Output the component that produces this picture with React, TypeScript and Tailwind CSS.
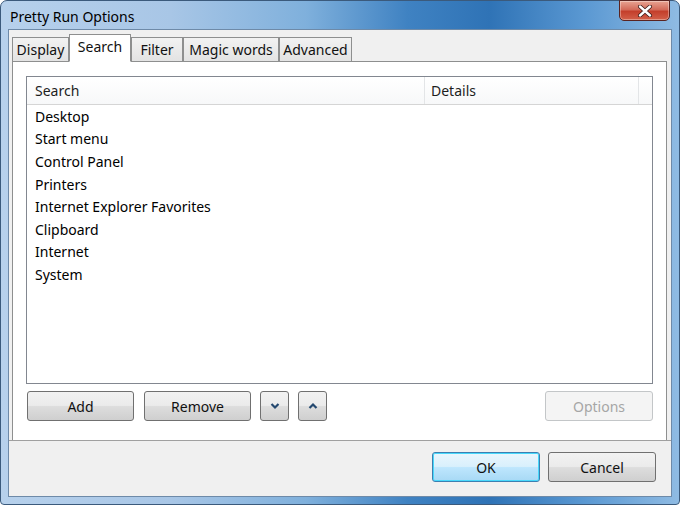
import React from "react";

const font = { fontFamily: '"Noto Sans", "Open Sans", sans-serif' };

function Btn({ children, w, disabled, primary }: { children: React.ReactNode; w: string; disabled?: boolean; primary?: boolean }) {
  let cls = "border-[#707070] bg-[linear-gradient(#f2f2f2_0%,#ebebeb_48%,#dddddd_52%,#cfcfcf_100%)] text-[#111]";
  if (disabled) cls = "border-[#c3c6c8] bg-[#f4f4f4] text-[#a6a6a6]";
  if (primary) cls = "border-[#3c7fb1] bg-[linear-gradient(#eaf6fd_0%,#d9f0fc_48%,#bee6fd_52%,#a7d9f5_100%)] text-[#111] shadow-[inset_0_0_0_1px_#48d8fb]";
  return (
    <div className={`${w} h-[30px] flex items-center justify-center rounded-[3px] border text-[14px] ${cls}`}>
      {children}
    </div>
  );
}

function Tab({ label, w, active }: { label: string; w: string; active?: boolean }) {
  if (active)
    return (
      <div className={`${w} h-[28px] -mb-px z-10 bg-white border border-[#8e8f8f] border-b-white flex items-center justify-center text-[14px] text-[#111] pb-[3px]`}>
        {label}
      </div>
    );
  return (
    <div className={`${w} h-[24px] mt-[3px] bg-[linear-gradient(#f2f2f2,#e3e3e3)] border border-[#8e8f8f] border-b-0 flex items-center justify-center text-[14px] text-[#111]`}>
      {label}
    </div>
  );
}

export default function App() {
  const items = ["Desktop", "Start menu", "Control Panel", "Printers", "Internet Explorer Favorites", "Clipboard", "Internet", "System"];
  return (
    <div className="w-[680px] h-[505px] bg-white overflow-hidden" style={font}>
      <div className="w-[680px] h-[505px] flex flex-col rounded-t-[7px] rounded-b-[4px] border border-[#3b5a7c] bg-[linear-gradient(90deg,#b7d1ec_0%,#a8c6e6_25%,#7fb0dc_45%,#3f82c2_60%,#2f73b6_72%,#5a98d2_86%,#8fbbe3_100%)]">
        <div className="h-[28px] flex items-start justify-between pl-[9px] pr-[9px]">
          <div className="text-[14px] text-black mt-[5px]">Pretty Run Options</div>
          <div className="w-[51px] h-[21px] -mt-px rounded-b-[5px] border border-[#5a2320] bg-[linear-gradient(#e8a493_0%,#d36b5a_45%,#c43f2c_55%,#d2604a_100%)] flex items-center justify-center shadow-[inset_0_0_0_1px_rgba(255,255,255,0.35)]">
            <svg width="16" height="12" viewBox="0 0 16 12">
              <path d="M3 1.5 L13 10.5 M13 1.5 L3 10.5" stroke="#3a1a18" strokeWidth="4" strokeLinecap="round" />
              <path d="M3 1.5 L13 10.5 M13 1.5 L3 10.5" stroke="#ffffff" strokeWidth="2.4" strokeLinecap="round" />
            </svg>
          </div>
        </div>
        <div className="flex-1 mx-[7px] mb-[7px] flex flex-col bg-[#f0f0f0] border border-[#6e8aa8]">
          <div className="flex-1 flex flex-col pl-[3px] pr-[4px] pt-[3px]">
            <div className="flex items-end h-[28px]">
              <Tab label="Display" w="w-[57px]" />
              <Tab label="Search" w="w-[62px]" active />
              <Tab label="Filter" w="w-[52px]" />
              <Tab label="Magic words" w="w-[96px]" />
              <Tab label="Advanced" w="w-[73px]" />
            </div>
            <div className="flex-1 bg-white border border-[#8e8f8f] border-b-0 flex flex-col px-[13px] pt-[14px]">
              <div className="h-[308px] border border-[#828790] flex flex-col">
                <div className="h-[28px] flex bg-[linear-gradient(#ffffff,#f7f8f9)] border-b border-[#d5d5d5] text-[14px] text-[#1e1e1e]">
                  <div className="w-[398px] border-r border-[#e3e5e7] pl-[8px] flex items-center">Search</div>
                  <div className="w-[214px] border-r border-[#e3e5e7] pl-[6px] flex items-center">Details</div>
                  <div className="flex-1" />
                </div>
                <div className="flex flex-col text-[14px] text-black">
                  {items.map((t) => (
                    <div key={t} className="h-[22.6px] pl-[8px] flex items-center">{t}</div>
                  ))}
                </div>
              </div>
              <div className="flex items-center mt-[7px] pl-px">
                <Btn w="w-[107px]">Add</Btn>
                <div className="w-[10px]" />
                <Btn w="w-[107px]">Remove</Btn>
                <div className="w-[9px]" />
                <Btn w="w-[29px]">
                  <svg width="10" height="8" viewBox="0 0 10 8"><path d="M1.5 2 L5 5.5 L8.5 2" stroke="#23486f" strokeWidth="2.2" fill="none" /></svg>
                </Btn>
                <div className="w-[9px]" />
                <Btn w="w-[29px]">
                  <svg width="10" height="8" viewBox="0 0 10 8"><path d="M1.5 6 L5 2.5 L8.5 6" stroke="#23486f" strokeWidth="2.2" fill="none" /></svg>
                </Btn>
                <div className="flex-1" />
                <Btn w="w-[108px]" disabled>Options</Btn>
              </div>
            </div>
          </div>
          <div className="h-[56px] border-t border-[#a0a0a0] bg-[#f0f0f0] flex items-start justify-end pt-[11px] pr-[15px] gap-[8px]">
            <Btn w="w-[108px]" primary>OK</Btn>
            <Btn w="w-[108px]">Cancel</Btn>
          </div>
        </div>
      </div>
    </div>
  );
}
